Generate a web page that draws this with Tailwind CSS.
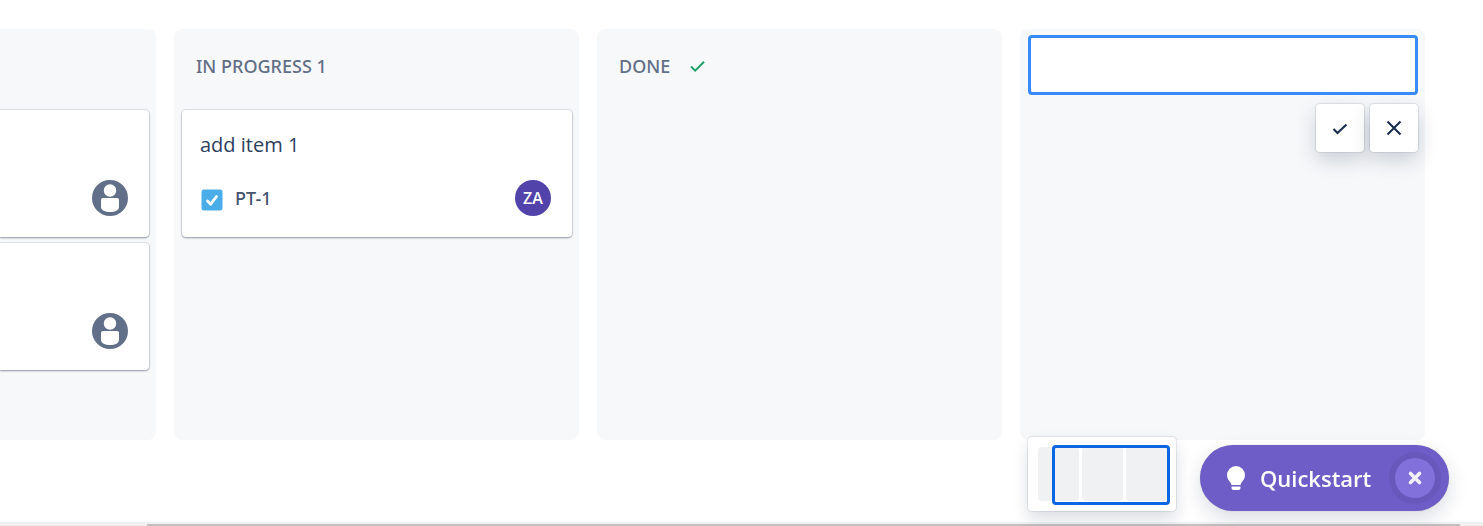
<!DOCTYPE html>
<html lang="en">
<head>
<meta charset="utf-8">
<meta name="viewport" content="width=device-width, initial-scale=1">
<title>Board</title>
<script src="https://cdn.jsdelivr.net/npm/@tailwindcss/browser@4"></script>
</head>
<body class="flex min-h-screen flex-col overflow-hidden bg-white font-['Open_Sans','Noto_Sans',sans-serif] text-[#172b4d]">
<main class="flex flex-1 gap-[18px] pt-[29px] pr-[58px] pb-[82px]">
  <section aria-label="To do" class="flex w-[156px] shrink-0 flex-col gap-[6px] rounded-r-lg bg-[#f7f8fa] pt-[81px] pr-[7px]">
    <article class="flex h-[127px] items-end justify-end rounded-r bg-white pr-[21px] pb-[21px] shadow-[0_1px_2px_#091e4260,0_0_1px_1px_#091e4218]">
      <svg class="size-9" viewBox="0 0 36 36" role="img" aria-label="Unassigned"><circle cx="18" cy="18" r="18" fill="#626f89"/><circle cx="18" cy="10.500" r="6.200" fill="#fff"/><path d="M11 18h14a2 2 0 0 1 2 2v7c0 3-4 5-9 5s-9-2-9-5v-7a2 2 0 0 1 2-2Z" fill="#fff"/></svg>
    </article>
    <article class="flex h-[127px] items-end justify-end rounded-r bg-white pr-[21px] pb-[21px] shadow-[0_1px_2px_#091e4260,0_0_1px_1px_#091e4218]">
      <svg class="size-9" viewBox="0 0 36 36" role="img" aria-label="Unassigned"><circle cx="18" cy="18" r="18" fill="#626f89"/><circle cx="18" cy="10.500" r="6.200" fill="#fff"/><path d="M11 18h14a2 2 0 0 1 2 2v7c0 3-4 5-9 5s-9-2-9-5v-7a2 2 0 0 1 2-2Z" fill="#fff"/></svg>
    </article>
  </section>

  <section class="flex flex-1 flex-col rounded-lg bg-[#f7f8fa] pr-[7px] pl-2">
    <h2 class="flex h-[81px] items-center pb-2 pl-[14px] font-['Noto_Sans',sans-serif] text-[18px] leading-6 font-medium text-[#626f86]">IN PROGRESS 1</h2>
    <article class="flex h-[127px] flex-col justify-between rounded bg-white pt-[21px] pr-[21px] pb-[21px] pl-[18px] shadow-[0_1px_2px_#091e4260,0_0_1px_1px_#091e4218]">
      <p class="text-[20px] leading-7 text-[#2c3e5d]">add item 1</p>
      <div class="flex items-center">
        <svg class="mt-1 ml-px size-[22px]" viewBox="0 0 22 22" role="img" aria-label="Task"><rect x=".5" y=".5" width="21" height="21" rx="2.500" fill="#4bade8"/><path d="m6.500 12 3.200 3.200 5.800-7.700" fill="none" stroke="#fff" stroke-width="2.800" stroke-linecap="round" stroke-linejoin="round"/></svg>
        <a href="#" class="ml-3 font-['Noto_Sans',sans-serif] text-[18px] leading-6 font-medium text-[#44546f]">PT-1</a>
        <span class="ml-auto flex size-9 items-center justify-center rounded-full bg-[#5243aa] text-[16px] font-semibold text-white">ZA</span>
      </div>
    </article>
  </section>

  <section class="flex flex-1 flex-col rounded-lg bg-[#f7f8fa] pr-[7px] pl-2">
    <h2 class="flex h-[81px] items-center gap-[18px] pb-2 pl-[14px] font-['Noto_Sans',sans-serif] text-[18px] leading-6 font-medium text-[#626f86]">DONE
      <svg class="size-5" viewBox="0 0 20 20" aria-hidden="true"><path d="m3 10.500 4.200 4.200 8.800-9" fill="none" stroke="#22a06b" stroke-width="2"/></svg>
    </h2>
  </section>

  <section aria-label="New column" class="flex flex-1 flex-col rounded-lg bg-[#f7f8fa] pt-[6px] pr-[7px] pl-2">
    <input type="text" aria-label="Column name" class="h-[60px] w-full rounded border-3 border-[#388bff] bg-white px-4 text-[18px] outline-none">
    <div class="mt-[9px] flex justify-end gap-[6px]">
      <button type="button" aria-label="Save" class="flex size-12 items-center justify-center rounded bg-white shadow-[0_8px_20px_#091e4230,0_0_1px_1px_#091e4218]">
        <svg class="size-6" viewBox="0 0 24 24" aria-hidden="true"><path d="m5.500 13 4 4 9-8.500" fill="none" stroke="#172b4d" stroke-width="2"/></svg>
      </button>
      <button type="button" aria-label="Cancel" class="flex size-12 items-center justify-center rounded bg-white shadow-[0_8px_20px_#091e4230,0_0_1px_1px_#091e4218]">
        <svg class="size-6" viewBox="0 0 24 24" aria-hidden="true"><path d="m5.500 5.500 13 13m0-13-13 13" fill="none" stroke="#172b4d" stroke-width="2"/></svg>
      </button>
    </div>
  </section>
</main>

<div class="h-1 bg-[#f1f1f1] pt-[2px] pr-[23px] pl-[147px]"><div class="h-[2px] bg-[#c1c1c1]"></div></div>

<div class="fixed right-[34px] bottom-[15px] flex items-end gap-6">
  <div aria-label="Board overview" class="relative flex h-[74px] w-[148px] gap-[3px] rounded bg-white py-[10px] pr-[9px] pl-[10px] shadow-[0_8px_16px_#091e4226,0_0_1px_1px_#091e4218]">
    <div class="flex-1 rounded bg-[#f0f1f3]"></div>
    <div class="flex-1 rounded bg-[#f0f1f3]"></div>
    <div class="flex-1 rounded bg-[#f0f1f3]"></div>
    <div class="absolute top-2 right-[6px] h-[60px] w-[118px] rounded border-3 border-[#0c66e4]"></div>
  </div>
  <div class="flex h-[66px] w-[249px] items-center rounded-full bg-[#6e5dc6] pr-[14px] pl-6 text-white shadow-[0_8px_20px_#091e4226,0_0_1px_#091e424f]">
    <button type="button" class="flex items-center gap-3 text-[22px] leading-8 font-semibold">
      <svg class="size-6" viewBox="0 0 24 24" aria-hidden="true"><path d="M12 0a9 9 0 0 0-9 9c0 3.400 1.700 5.400 3.300 7.200.6.700.9 1.800 1.100 2.800h9.200c.2-1 .5-2.100 1.100-2.800C19.300 14.400 21 12.400 21 9a9 9 0 0 0-9-9ZM7.500 20.500h9v1.500a2 2 0 0 1-2 2h-5a2 2 0 0 1-2-2Z" fill="#fff"/></svg>
      Quickstart
    </button>
    <button type="button" aria-label="Dismiss Quickstart" class="ml-auto flex size-10 items-center justify-center rounded-full bg-[#8270db] shadow-[0_0_0_6px_#6958bb]">
      <svg class="size-6" viewBox="0 0 24 24" aria-hidden="true"><path d="m7.500 7.500 9 9m0-9-9 9" fill="none" stroke="#f3f0ff" stroke-width="3.600" stroke-linecap="round"/></svg>
    </button>
  </div>
</div>
</body>
</html>
